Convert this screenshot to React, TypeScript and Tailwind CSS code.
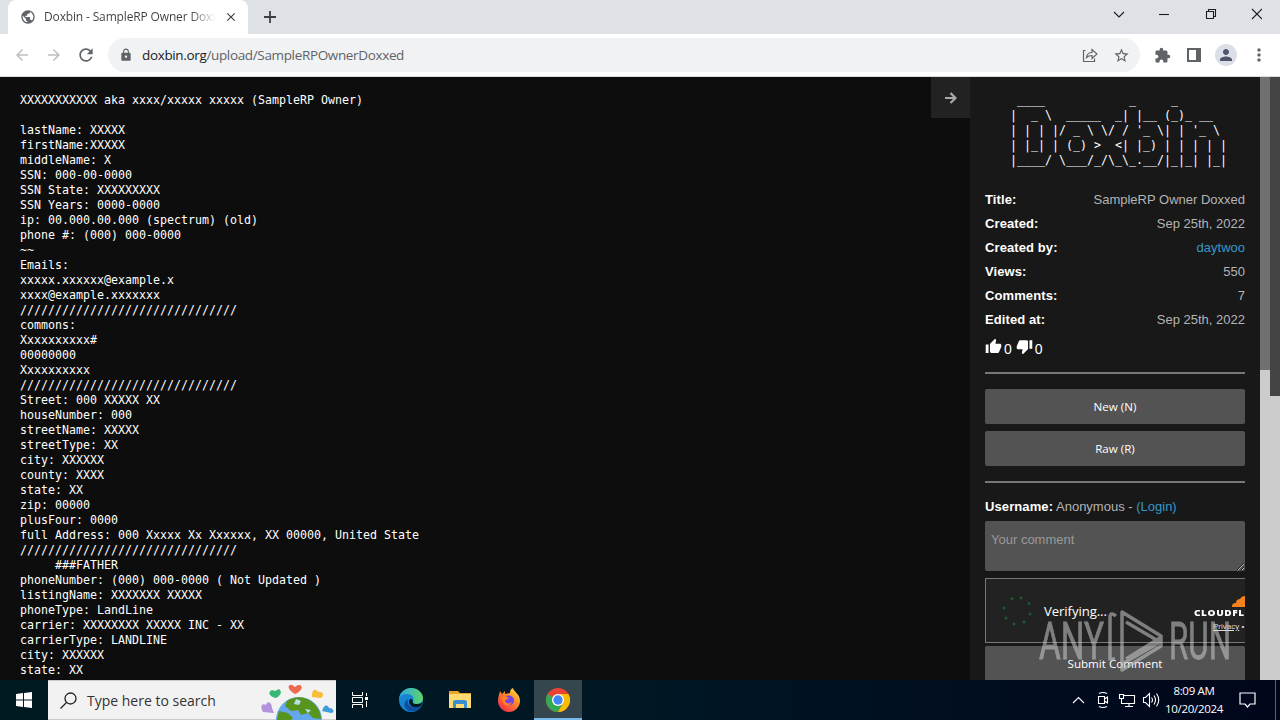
import type { ReactNode } from 'react'
import {
  MdArrowBack,
  MdArrowForward,
  MdClose,
  MdExtension,
  MdLock,
  MdMoreVert,
  MdPerson,
  MdPublic,
  MdRefresh,
  MdStarBorder,
  MdThumbDown,
  MdThumbUp,
} from 'react-icons/md'

const slashes = '/'.repeat(31)

// personal values are masked before display
const paste = [
  'XXXXXXXXXXX aka xxxx/xxxxx xxxxx (SampleRP Owner)',
  '',
  'lastName: XXXXX',
  'firstName:XXXXX',
  'middleName: X',
  'SSN: 000-00-0000',
  'SSN State: XXXXXXXXX',
  'SSN Years: 0000-0000',
  'ip: 00.000.00.000 (spectrum) (old)',
  'phone #: (000) 000-0000',
  '~~',
  'Emails:',
  'xxxxx.xxxxxx@example.x',
  'xxxx@example.xxxxxxx',
  slashes,
  'commons:',
  'Xxxxxxxxxx#',
  '00000000',
  'Xxxxxxxxxx',
  slashes,
  'Street: 000 XXXXX XX',
  'houseNumber: 000',
  'streetName: XXXXX',
  'streetType: XX',
  'city: XXXXXX',
  'county: XXXX',
  'state: XX',
  'zip: 00000',
  'plusFour: 0000',
  'full Address: 000 Xxxxx Xx Xxxxxx, XX 00000, United State',
  slashes,
  '     ###FATHER',
  'phoneNumber: (000) 000-0000 ( Not Updated )',
  'listingName: XXXXXXX XXXXX',
  'phoneType: LandLine',
  'carrier: XXXXXXXX XXXXX INC - XX',
  'carrierType: LANDLINE',
  'city: XXXXXX',
  'state: XX',
].join('\n')

const logo = [
  ' ____            _     _       ',
  '|  _ \\  _____  _| |__ (_)_ __  ',
  "| | | |/ _ \\ \\/ / '_ \\| | '_ \\ ",
  '| |_| | (_) >  <| |_) | | | | |',
  '|____/ \\___/_/\\_\\_.__/|_|_| |_|',
].join('\n')

const details = [
  { label: 'Title:', value: 'SampleRP Owner Doxxed' },
  { label: 'Created:', value: 'Sep 25th, 2022' },
  { label: 'Created by:', value: 'daytwoo', link: true },
  { label: 'Views:', value: '550' },
  { label: 'Comments:', value: '7' },
  { label: 'Edited at:', value: 'Sep 25th, 2022' },
]

function TabStrip() {
  return (
    <div className="flex h-[34px] bg-[#dee1e6] pl-2">
      <div className="flex h-full w-60 items-center rounded-t-lg bg-white pl-3">
        <MdPublic className="size-4 shrink-0 text-[#5f6368]" />
        <div className="ml-2 w-[172px] overflow-hidden whitespace-nowrap bg-linear-to-r from-[#3c4043] from-85% to-transparent bg-clip-text text-[12px] tracking-[-0.150px] text-transparent">
          Doxbin - SampleRP Owner Doxxed
        </div>
        <MdClose className="ml-2 size-[14px] text-[#3c4043]" />
      </div>
      <svg className="mt-[10px] ml-[15px] size-[14px]" viewBox="0 0 14 14" stroke="#3c4043" strokeWidth="1.8">
        <path d="M7 1v12M1 7h12" />
      </svg>
      <svg
        className="mt-[7px] mr-[18px] ml-auto"
        width="150"
        height="14"
        viewBox="0 0 150 14"
        fill="none"
        stroke="#1c1c1c"
        strokeWidth="1.1"
      >
        <path d="M2 5l5 5 5-5" />
        <path d="M47 7.500h10" />
        <path d="M94.500 4.500h7v7h-7zM96.500 4.500v-2h7v7h-2" />
        <path d="M150 2l-10 10M140 2l10 10" />
      </svg>
    </div>
  )
}

function Toolbar() {
  return (
    <div className="flex h-[43px] items-center border-b border-[#dadce0] bg-white pl-[13px] text-[#5f6368]">
      <MdArrowBack className="size-[18px] text-[#bcbec1]" />
      <MdArrowForward className="ml-[14px] size-[18px] text-[#bcbec1]" />
      <MdRefresh className="ml-[13px] size-5" />
      <div className="ml-3 flex h-[34px] w-[1032px] items-center rounded-full bg-[#f0f2f4] pr-[10px] pl-[11px]">
        <MdLock className="size-[14px]" />
        <span className="ml-[9px] text-[13.500px] tracking-[-0.350px]">
          <span className="text-[#202124]">doxbin.org</span>/upload/SampleRPOwnerDoxxed
        </span>
        <svg className="ml-auto size-4" viewBox="0 0 16 16" fill="none" stroke="currentColor" strokeWidth="1.2">
          <path d="M3.500 3.500H1.500v11h11v-3M4.500 10.500c.5-3.500 2.500-5 5.500-5v-3l5 4.500-5 4.500V8.500c-2.500 0-4 .5-5.500 2z" />
        </svg>
        <MdStarBorder className="ml-[15px] size-[17px]" />
      </div>
      <MdExtension className="ml-[14px] size-[17px]" />
      <svg className="ml-4 size-[14px]" viewBox="0 0 14 14">
        <path d="M0 0h14v14H0zM2 2v10h7V2z" fill="currentColor" fillRule="evenodd" />
      </svg>
      <div className="ml-[14px] flex size-[22px] items-center justify-center rounded-full bg-[#dcdfe8]">
        <MdPerson className="size-[18px] text-[#50556b]" />
      </div>
      <MdMoreVert className="ml-[12px] size-5" />
    </div>
  )
}

function SideButton({ children }: { children: ReactNode }) {
  return (
    <button className="h-[35px] w-full rounded-[2px] bg-[#535353] font-['Open_Sans',sans-serif] text-[11.600px] text-white">
      {children}
    </button>
  )
}

function Turnstile() {
  return (
    <div className="mt-[7px] flex h-[65px] overflow-hidden border border-r-0 border-[#777] bg-[#222] pl-4">
      <svg className="mt-[17px] size-[30px] shrink-0" viewBox="0 0 30 30" fill="#1c5a30">
        <circle cx="10" cy="2.500" r="1.500" />
        <circle cx="19" cy="1.800" r="1.500" />
        <circle cx="27" cy="7.500" r="1.500" />
        <circle cx="28" cy="18" r="1.500" />
        <circle cx="22" cy="26" r="1.500" />
        <circle cx="12" cy="28" r="1.500" />
        <circle cx="4" cy="22" r="1.500" />
        <circle cx="2" cy="12" r="1.500" />
      </svg>
      <span className="mt-[22px] ml-3 font-['Open_Sans',sans-serif] text-[13.200px] leading-5 tracking-[-0.100px] text-white">
        Verifying...
      </span>
      <div className="mt-[17px] ml-auto w-[51px] shrink-0">
        <svg className="ml-[38px] h-[11px] w-[13px]" viewBox="0 0 13 11">
          <path d="M0 11c0-3 1-4 4-4 0-3 2-4 4-4 1-2 3-3 5-3v11z" fill="#f6821f" />
        </svg>
        <div className="origin-left scale-x-125 font-['Open_Sans',sans-serif] text-[8px] leading-[12px] font-extrabold tracking-[0.500px] text-white">
          CLOUDFL
        </div>
        <div className="mt-[2px] ml-[19px] text-[8px] leading-[12px] whitespace-nowrap text-[#ddd]">
          <span className="underline">Privacy</span> •
        </div>
      </div>
    </div>
  )
}

function Sidebar() {
  return (
    <aside className="w-[290px] shrink-0 bg-[#181818] px-[15px] pt-4 font-['Liberation_Sans',Arial,sans-serif] text-[13px] text-[#b4b4b4]">
      <pre className="ml-[25px] font-['DejaVu_Sans_Mono',monospace] text-[11.630px] leading-[15px] text-white">
        {logo}
      </pre>
      <div className="mt-5">
        {details.map(({ label, value, link }) => (
          <div key={label} className="flex h-6 items-center justify-between">
            <b className="tracking-[0.100px] text-white">{label}</b>
            <span className={link ? 'text-[#3498c8]' : ''}>{value}</span>
          </div>
        ))}
      </div>
      <div className="flex h-7 items-center text-white">
        <MdThumbUp className="size-[17px]" />
        <span className="mt-[6px] ml-[2px] text-[14px]">0</span>
        <MdThumbDown className="ml-1 size-[17px]" />
        <span className="mt-[6px] ml-[2px] text-[14px]">0</span>
      </div>
      <hr className="mt-3 mb-[15px] border-t-2 border-[#777]" />
      <div className="flex flex-col gap-[7px]">
        <SideButton>New (N)</SideButton>
        <SideButton>Raw (R)</SideButton>
      </div>
      <hr className="mt-[15px] border-t-2 border-[#777]" />
      <div className="mt-[14px] h-6 leading-5">
        <b className="tracking-[0.100px] text-white">Username:</b> Anonymous - <span className="text-[#3498c8]">(Login)</span>
      </div>
      <textarea
        className="block h-[50px] w-full rounded-[2px] bg-[#535353] px-[6px] pt-[9px] placeholder:text-[#999]"
        placeholder="Your comment"
      />
      <Turnstile />
      <div className="mt-[3px] pl-[2px] -ml-[2px]">
        <SideButton>Submit Comment</SideButton>
      </div>
    </aside>
  )
}

function Watermark() {
  return (
    <svg
      className="absolute top-[605px] left-[1036px] h-[70px] w-[200px] font-['Roboto',sans-serif] opacity-55"
      viewBox="0 0 200 70"
      fill="none"
      stroke="#ccc"
      strokeWidth="3.500"
    >
      <text x="3" y="54" fontSize="52" fontWeight="400" fill="#ccc" stroke="#ccc" strokeWidth="0.800" textLength="65" lengthAdjust="spacingAndGlyphs">
        ANY
      </text>
      <path d="M80 11q-6-5-6 2v41h5" />
      <path d="M86 54V7l39 24M90 17l34 20-38 22M86 54v11l39-24V30M90 54l34-21" strokeLinejoin="round" />
      <text x="133" y="54" fontSize="52" fontWeight="400" fill="#ccc" stroke="#ccc" strokeWidth="0.800" textLength="62" lengthAdjust="spacingAndGlyphs">
        RUN
      </text>
    </svg>
  )
}

function Earth() {
  return (
    <svg className="ml-auto h-[39px] w-[76px]" viewBox="0 0 76 39">
      <circle cx="39" cy="39" r="23" fill="#65a7ed" />
      <path d="M27 20c7-5 18-5 25 1 5 4 9 10 9 17l-8-1-5-5-7 2-3-5-7 1-6-5zM19 30l9 2 5 5-2 2H17z" fill="#57951f" />
      <path d="M36 18l5 2-2 4-5-1zM45 28l6 1-3 3z" fill="#b9dff0" />
      <path d="M35 13c-9-5-7-10-3-9l3 2 3-2c5-1 6 5-3 9z" fill="#ef6950" />
      <path d="M16 17c-8-2-8-6-4-8l3 1 4-2c4 3 1 7-3 9z" fill="#37b875" />
      <path d="M52 16c0-9 4-8 6-5 5-1 7 4 3 6z" fill="#f8bd35" />
      <path d="M3 31c-4-7 0-9 3-7 1-5 6-3 6 3l2 5z" fill="#b393dc" />
      <path d="M62 30c2-6 5-7 7-3 5 0 6 5 2 5z" fill="#3d9ddc" />
    </svg>
  )
}

function TaskIcons() {
  return (
    <div className="flex h-full">
      <div className="flex w-12 items-center justify-center">
        <svg width="16" height="16" viewBox="0 0 16 16" fill="none" stroke="#fff">
          <path d="M.5 0v3.500h10V0M.5 16v-3.500h10V16M.5 5.500h10v5H.5zM14.500 1v3M14.500 9v6" />
          <path d="M13 5h3v3h-3z" fill="#fff" stroke="none" />
        </svg>
      </div>
      <div className="ml-[3px] flex w-12 items-center justify-center">
        <svg width="24" height="24" viewBox="0 0 24 24">
          <defs>
            <linearGradient id="edgeTop" x1="0" x2="1">
              <stop offset="0" stopColor="#2ba6e5" />
              <stop offset="1" stopColor="#5fd668" />
            </linearGradient>
          </defs>
          <circle cx="12" cy="12" r="12" fill="#1584d3" />
          <path d="M0 11C1 4 6 0 12 0c7 0 12 5 12 10 0 4-3 6-6 6-4 0-5-1-4-3 2-4-2-7-6-7-4 0-7 2-8 5z" fill="url(#edgeTop)" />
          <path d="M9 11c-2 5 3 11 13 7-3 5-8 6-12 5-6-3-6-9-1-12z" fill="#0d4f9e" />
          <path d="M14 13c-1 2 0 3 4 3 3 0 5-1 6-3l-2 5c-7 3-12 0-12-5 0-2 3-3 4 0z" fill="#001a24" />
        </svg>
      </div>
      <div className="ml-[1px] flex w-12 items-center justify-center">
        <svg width="22" height="20" viewBox="0 0 22 20">
          <path d="M0 1h9l2 2h11v15H0z" fill="#e9a52b" />
          <path d="M0 4h22v14H0z" fill="#fddb72" />
          <path d="M4 18v-7l2-1h10l2 1v7h-3v-4H7v4z" fill="#3b8fce" />
        </svg>
      </div>
      <div className="ml-[1px] flex w-12 items-center justify-center">
        <svg width="24" height="24" viewBox="0 0 24 24">
          <defs>
            <linearGradient id="fox" x1="1" y1="0" x2="0.200" y2="1">
              <stop offset="0" stopColor="#fff34f" />
              <stop offset="0.450" stopColor="#ff8b24" />
              <stop offset="1" stopColor="#f0284f" />
            </linearGradient>
          </defs>
          <path d="M3 3l2 3 3-3v3l5-1c0-3 1-4 3-5 1 4 7 6 7 13 0 6-5 11-11 11S1 19 1 13c0-4 1-6 2-10z" fill="url(#fox)" />
          <circle cx="12" cy="12.500" r="5" fill="#7542e5" />
          <path d="M5 9c3-2 5 0 7 1-1 2-4 1-4 3 1 3 5 3 7 1-2 6-10 5-10-5z" fill="#ff8120" />
        </svg>
      </div>
      <div className="ml-[1px] flex w-12 items-center justify-center border-b-2 border-[#76b9ed] bg-[#35464f] pt-[2px]">
        <svg width="24" height="24" viewBox="0 0 24 24">
          <circle cx="12" cy="12" r="12" fill="#ea4335" />
          <path d="M1.600 6A12 12 0 0 0 12 24l5.200-9L12 12z" fill="#34a853" />
          <path d="M12 6h10.400A12 12 0 0 1 12 24l5.200-9z" fill="#fbbc05" />
          <circle cx="12" cy="12" r="6" fill="#fff" />
          <circle cx="12" cy="12" r="4.700" fill="#4285f4" />
        </svg>
      </div>
    </div>
  )
}

function Taskbar() {
  return (
    <footer className="flex h-10 items-center bg-linear-to-r from-[#001a22] via-[#001724] to-[#01061b] text-white">
      <div className="flex w-12 justify-center">
        <svg width="16" height="16" viewBox="0 0 16 16" fill="#fff">
          <path d="M0 2l7-1v6.500H0zM8 1l8-1v7.500H8zM0 8.500h7V15l-7-1zM8 8.500h8V16l-8-1z" />
        </svg>
      </div>
      <div className="flex h-full w-72 items-center border-y border-[#ccc] bg-[#f2f2f2] pl-3">
        <svg width="17" height="17" viewBox="0 0 17 17" fill="none" stroke="#222" strokeWidth="1.300">
          <circle cx="10.500" cy="6.500" r="5.500" />
          <path d="M6.500 10.500L.5 16.500" />
        </svg>
        <span className="ml-[10px] text-[14px] text-[#333]">Type here to search</span>
        <Earth />
      </div>
      <TaskIcons />
      <div className="ml-auto flex items-center">
        <svg width="88" height="18" viewBox="0 0 88 18" fill="none" stroke="#fff" strokeWidth="1.100">
          <path d="M1 12l5.500-5.500L12 12" />
          <path d="M26.500 5.500h6v7h-6zM32.500 8l3-2v6l-3-2M27 2.500q4-2 8 0M27 15.500q4 2 8 0" />
          <path d="M51.500 4.500h11v8h-13v-4M57 12.500v3M53 15.500h8M47.500 3.500h4v4h-4zM49.500 7.500v5" />
          <path d="M71.500 6.500h2l4-4v13l-4-4h-2zM79.500 6.500q2 2.500 0 5M82 4.500q3 4.500 0 9M84.500 2.500q4.500 6.500 0 13" />
        </svg>
        <div className="ml-1 w-[60px] text-center text-[11.500px] leading-[18px] tracking-[-0.300px] whitespace-nowrap">
          8:09 AM
          <br />
          10/20/2024
        </div>
        <svg className="ml-[15px]" width="18" height="17" viewBox="0 0 18 17" fill="none" stroke="#fff" strokeWidth="1.200">
          <path d="M1 1h15v11h-5l-2.500 3L6 12H1z" />
        </svg>
        <span className="ml-[18px] h-10 w-[5px] border-l border-[#596273]" />
      </div>
    </footer>
  )
}

export default function App() {
  return (
    <div className="relative flex h-[720px] w-[1280px] flex-col overflow-hidden font-['Open_Sans',sans-serif]">
      <TabStrip />
      <Toolbar />
      <main className="flex h-[603px] overflow-hidden bg-[#0d0d0d]">
        <pre className="min-w-0 flex-1 overflow-hidden pt-4 pl-5 font-['DejaVu_Sans_Mono',monospace] text-[11.630px] leading-[15px] text-white">
          {paste}
        </pre>
        <div className="flex h-[41px] w-[39px] items-center justify-center bg-[#222]">
          <svg width="12" height="12" viewBox="0 0 12 12" fill="none" stroke="#aaa" strokeWidth="2.200">
            <path d="M0 6h10M5.500 1l5 5-5 5" />
          </svg>
        </div>
        <Sidebar />
        <div className="w-[10px] bg-[#ccc]">
          <div className="h-[293px] bg-[#707070]" />
        </div>
        <div className="w-[10px] bg-[#ccc]">
          <div className="h-[319px] bg-[#444]" />
        </div>
      </main>
      <Taskbar />
      <Watermark />
    </div>
  )
}
